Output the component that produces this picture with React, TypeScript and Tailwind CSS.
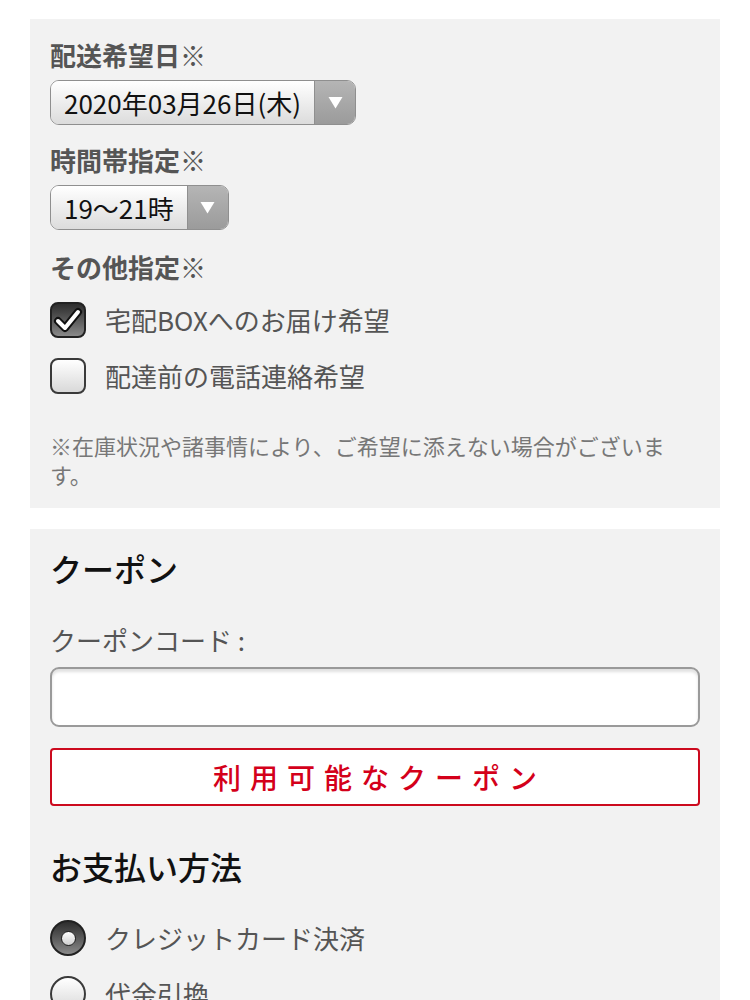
import React from "react";

const FONT = { fontFamily: '"Noto Sans CJK JP", "Noto Sans", sans-serif' };

function SelectBox({ value }: { value: string }) {
  return (
    <div className="mt-[7px] inline-flex h-[45px] overflow-hidden rounded-[9px] border border-[#8f8f8f]">
      <div className="flex items-center bg-gradient-to-b from-white to-[#dcdcdc] pl-[13px] pr-[13px] text-[26px] text-[#111]">
        {value}
      </div>
      <div className="flex w-[41px] items-center justify-center border-l border-[#8f8f8f] bg-gradient-to-b from-[#b5b5b5] to-[#9b9b9b]">
        <svg width="15" height="13" viewBox="0 0 15 13">
          <path d="M0.5 1 L14.5 1 L7.5 12.5 Z" fill="#fff" />
        </svg>
      </div>
    </div>
  );
}

function Checkbox({ checked, label }: { checked: boolean; label: string }) {
  return (
    <div className="flex items-center">
      <div
        className={
          checked
            ? "flex h-[36px] w-[36px] items-center justify-center rounded-[8px] border-2 border-[#222] bg-gradient-to-b from-[#2e2e2e] to-[#8a8a8a]"
            : "h-[36px] w-[36px] rounded-[8px] border-2 border-[#3a3a3a] bg-gradient-to-b from-white to-[#d9d9d9]"
        }
      >
        {checked && (
          <svg width="30" height="30" viewBox="0 0 30 30">
            <path
              d="M5 16 L12 23 L25 7"
              fill="none"
              stroke="#111"
              strokeWidth="8"
              strokeLinecap="round"
              strokeLinejoin="round"
            />
            <path
              d="M5 16 L12 23 L25 7"
              fill="none"
              stroke="#fff"
              strokeWidth="4"
              strokeLinecap="round"
              strokeLinejoin="round"
            />
          </svg>
        )}
      </div>
      <span className="ml-[19px] text-[26px] leading-[36px] text-[#555]">{label}</span>
    </div>
  );
}

function Radio({ checked, label }: { checked: boolean; label: string }) {
  return (
    <div className="flex items-center">
      <div
        className={
          checked
            ? "flex h-[36px] w-[36px] items-center justify-center rounded-full border-2 border-[#222] bg-gradient-to-b from-[#2e2e2e] to-[#8a8a8a]"
            : "h-[36px] w-[36px] rounded-full border-2 border-[#3a3a3a] bg-gradient-to-b from-white to-[#d9d9d9]"
        }
      >
        {checked && (
          <div className="h-[15px] w-[15px] rounded-full border border-[#222] bg-gradient-to-b from-white to-[#cfcfcf]" />
        )}
      </div>
      <span className="ml-[19px] text-[26px] leading-[36px] text-[#555]">{label}</span>
    </div>
  );
}

export default function App() {
  return (
    <div className="min-h-[1000px] bg-white pt-[19px]" style={FONT}>
      <div className="mx-[30px] bg-[#f2f2f2] px-[20px] pb-[19px] pt-[18px]">
        <div className="text-[26px] font-bold leading-[36px] text-[#555]">配送希望日※</div>
        <SelectBox value="2020年03月26日(木)" />
        <div className="mt-[17px] text-[26px] font-bold leading-[36px] text-[#555]">時間帯指定※</div>
        <SelectBox value="19〜21時" />
        <div className="mt-[19px] text-[26px] font-bold leading-[36px] text-[#555]">その他指定※</div>
        <div className="mt-[17px] flex flex-col gap-[20px]">
          <Checkbox checked label="宅配BOXへのお届け希望" />
          <Checkbox checked={false} label="配達前の電話連絡希望" />
        </div>
        <p className="mt-[37px] w-[628px] text-[22px] leading-[29px] text-[#777]">
          ※在庫状況や諸事情により、ご希望に添えない場合がございます。
        </p>
      </div>

      <div className="mx-[30px] mt-[21px] bg-[#f2f2f2] px-[20px] pb-[40px] pt-[17px]">
        <h2 className="text-[32px] font-medium leading-[44px] text-[#111]">クーポン</h2>
        <div className="mt-[32px] text-[26px] leading-[36px] text-[#555]">クーポンコード :</div>
        <input
          type="text"
          className="mt-[9px] block h-[60px] w-full rounded-[9px] border-2 border-[#9a9a9a] bg-white px-3 shadow-[inset_0_3px_3px_rgba(0,0,0,0.12)] outline-none"
        />
        <button
          type="button"
          className="mt-[21px] flex h-[58px] w-full items-center justify-center rounded-[4px] border-2 border-[#cc0a1e] bg-white pl-[9px] text-[28px] font-medium tracking-[9px] text-[#d4001a]"
        >
          利用可能なクーポン
        </button>
        <h2 className="mt-[38px] text-[32px] font-medium leading-[44px] text-[#111]">お支払い方法</h2>
        <div className="mt-[32px] flex flex-col gap-[20px]">
          <Radio checked label="クレジットカード決済" />
          <Radio checked={false} label="代金引換" />
        </div>
      </div>
    </div>
  );
}
